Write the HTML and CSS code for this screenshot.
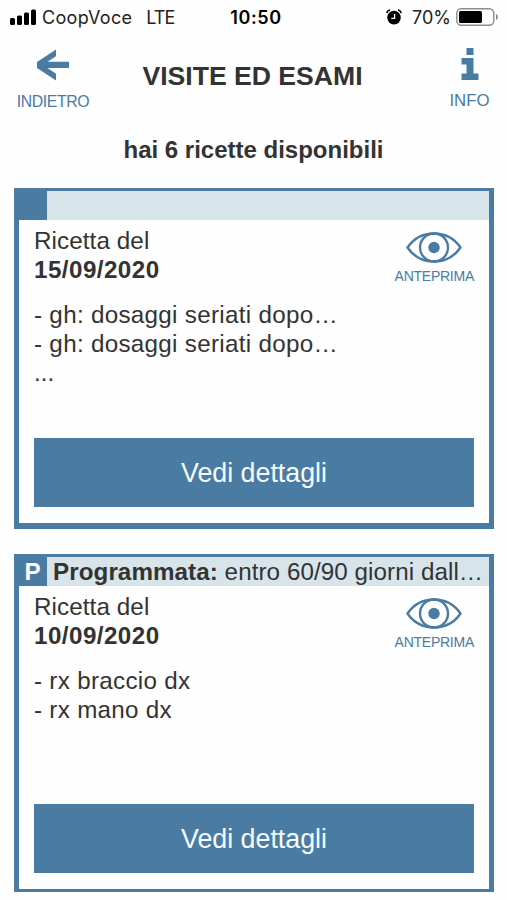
FILE: index.html
```html
<!DOCTYPE html>
<html lang="it">

<head>
    <meta charset="UTF-8">
    <meta name="viewport" content="width=device-width, initial-scale=1.0">
    <title>Visite ed esami</title>
    <link rel="stylesheet" href="styles.css">
</head>

<body>
    <div class="status-bar">
        <div class="status-left">
            <svg class="signal" width="27" height="17" viewBox="0 0 27 17">
                <rect x="0" y="9" width="5" height="7" rx="1.5" />
                <rect x="7" y="6.5" width="5" height="9.5" rx="1.5" />
                <rect x="14" y="3.5" width="5" height="12.5" rx="1.5" />
                <rect x="21" y="0.5" width="5" height="15.5" rx="1.5" />
            </svg>
            <span class="carrier">CoopVoce</span>
            <span class="network">LTE</span>
        </div>
        <div class="clock">10:50</div>
        <div class="status-right">
            <svg class="alarm" width="16" height="16" viewBox="0 0 16 16">
                <circle cx="8" cy="8.6" r="6.8" />
                <path d="M0.8 4.2 A4 4 0 0 1 4 1 M12 1 A4 4 0 0 1 15.2 4.2" fill="none" stroke="#000" stroke-width="1.5" />
                <path d="M8.6 5 V9.3 H5.2" fill="none" stroke="#fff" stroke-width="1.3" />
            </svg>
            <span class="percent">70%</span>
            <svg class="battery" width="43" height="18" viewBox="0 0 43 18">
                <rect x="0.8" y="0.8" width="37" height="16.4" rx="4.5" fill="none" stroke="#8c8c8c" stroke-width="1.4" />
                <rect x="3" y="3" width="23" height="12" rx="1.5" />
                <path d="M40 6 C42.5 7 42.5 11 40 12 Z" fill="#8c8c8c" />
            </svg>
        </div>
    </div>

    <header>
        <a class="nav-btn back" href="#">
            <svg width="34" height="32" viewBox="0 0 34 32">
                <path d="M20 0.5 V7.2 L11.5 12.8 H33 V19 H11.5 L20 24.8 V31.5 L1 19 V13 Z" />
            </svg>
            <span>INDIETRO</span>
        </a>
        <h1>VISITE ED ESAMI</h1>
        <a class="nav-btn info" href="#">
            <svg width="18" height="32" viewBox="0 0 18 32">
                <path d="M5.5 0 H12.5 V7 H5.5 Z M0.5 10 H12.5 V25.5 H17.5 V32 H0.5 V25.5 H5.5 V16.5 H0.5 Z" />
            </svg>
            <span>INFO</span>
        </a>
    </header>

    <main>
        <h2>hai 6 ricette disponibili</h2>

        <section class="card">
            <div class="priority">
                <div class="badge"></div>
                <div class="priority-text"></div>
            </div>
            <div class="card-body">
                <div class="card-top">
                    <p class="date">Ricetta del<br><strong>15/09/2020</strong></p>
                    <a class="preview" href="#">
                        <svg width="56" height="31" viewBox="0 0 56 31">
                            <path d="M1.5 15.5 C8 6 17 1.5 28 1.5 S48 6 54.5 15.5 C48 25 39 29.5 28 29.5 S8 25 1.5 15.5 Z" />
                            <circle cx="28" cy="15.5" r="14" />
                            <circle class="pupil" cx="28" cy="15.5" r="5.7" />
                        </svg>
                        <span>ANTEPRIMA</span>
                    </a>
                </div>
                <ul>
                    <li>- gh: dosaggi seriati dopo…</li>
                    <li>- gh: dosaggi seriati dopo…</li>
                    <li class="more">...</li>
                </ul>
                <a class="details" href="#">Vedi dettagli</a>
            </div>
        </section>

        <section class="card last">
            <div class="priority">
                <div class="badge">P</div>
                <div class="priority-text"><strong>Programmata:</strong> entro 60/90 giorni dall…</div>
            </div>
            <div class="card-body">
                <div class="card-top">
                    <p class="date">Ricetta del<br><strong>10/09/2020</strong></p>
                    <a class="preview" href="#">
                        <svg width="56" height="31" viewBox="0 0 56 31">
                            <path d="M1.5 15.5 C8 6 17 1.5 28 1.5 S48 6 54.5 15.5 C48 25 39 29.5 28 29.5 S8 25 1.5 15.5 Z" />
                            <circle cx="28" cy="15.5" r="14" />
                            <circle class="pupil" cx="28" cy="15.5" r="5.7" />
                        </svg>
                        <span>ANTEPRIMA</span>
                    </a>
                </div>
                <ul>
                    <li>- rx braccio dx</li>
                    <li>- rx mano dx</li>
                </ul>
                <a class="details" href="#">Vedi dettagli</a>
            </div>
        </section>
    </main>
</body>

</html>
```

FILE: styles.css
```css
* {
    box-sizing: border-box;
}

body {
    margin: 0;
    height: 900px;
    overflow: hidden;
    background-color: #fefefe;
    color: #333;
    font-family: "Liberation Sans", Arial, sans-serif;
}

h1, h2, p, ul {
    margin: 0;
    padding: 0;
}

a {
    color: #4a7ba3;
    text-decoration: none;
}

svg {
    display: block;
    flex: none;
}

/* Phone status bar */
.status-bar {
    display: grid;
    grid-template-columns: 1fr auto 1fr;
    align-items: center;
    height: 34px;
    padding: 0 8px 0 10px;
    color: #222;
    font-family: Inter, sans-serif;
    font-size: 18px;
}

.status-left, .status-right {
    display: flex;
    align-items: center;
}

.status-right {
    justify-content: flex-end;
}

.carrier {
    margin-left: 5px;
    letter-spacing: 0.3px;
}

.network {
    margin-left: 14px;
    letter-spacing: -1px;
}

.clock {
    padding-left: 3px;
    color: #000;
    font-weight: 600;
    letter-spacing: 0.6px;
}

.percent {
    margin: 0 5px 0 10px;
}

/* Page header */
header {
    display: flex;
    justify-content: space-between;
    height: 86px;
    padding: 0 17px;
}

.nav-btn {
    display: flex;
    flex-direction: column;
    align-items: center;
    width: 72px;
    padding-top: 15px;
    font-size: 15.8px;
    line-height: 18px;
    letter-spacing: -0.4px;
}

.nav-btn svg {
    fill: #4a7ba3;
}

.nav-btn span {
    margin-top: 12px;
}

.info {
    width: 41px;
    padding-top: 14px;
    font-size: 16.8px;
    letter-spacing: 0;
}

h1 {
    padding: 27px 33px 0 0;
    font-size: 26.6px;
    line-height: 30px;
}

h2 {
    height: 68px;
    padding-top: 15px;
    font-size: 24px;
    line-height: 29px;
    text-align: center;
}

/* Prescription cards */
.card {
    display: flex;
    flex-direction: column;
    height: 341px;
    margin: 0 13px 25px 14px;
    border: solid #4a7ba3;
    border-width: 3px 5px 6px 5px;
    font-size: 24.2px;
    line-height: 29px;
}

.last {
    height: 338px;
    border-bottom-width: 3px;
}

.priority {
    display: flex;
    height: 29px;
    background-color: #d7e4ea;
}

.badge {
    width: 28px;
    padding-right: 1px;
    background-color: #4a7ba3;
    color: #fff;
    font-weight: bold;
    text-align: center;
}

.priority-text {
    padding-left: 6px;
    letter-spacing: 0.07px;
    white-space: nowrap;
}

.card-body {
    display: flex;
    flex: 1;
    flex-direction: column;
    padding: 6px 15px 16px;
}

.card-top {
    display: flex;
    justify-content: space-between;
    height: 74px;
}

.date {
    letter-spacing: 0.1px;
}

.date strong {
    letter-spacing: 0.45px;
}

.preview {
    display: flex;
    flex-direction: column;
    align-items: center;
    padding-top: 6px;
    font-size: 14px;
    line-height: 16px;
    letter-spacing: -0.25px;
}

.preview svg {
    fill: none;
    stroke: #4a7ba3;
    stroke-width: 2.4;
    stroke-linejoin: round;
}

.preview .pupil {
    fill: #4a7ba3;
    stroke: none;
}

.preview span {
    margin-top: 5px;
}

ul {
    list-style: none;
    letter-spacing: 0.3px;
}

.more {
    letter-spacing: 0;
}

.details {
    height: 69px;
    margin-top: auto;
    background-color: #4a7ba3;
    color: #f5fbff;
    font-size: 26.8px;
    line-height: 71px;
    text-align: center;
}
```
